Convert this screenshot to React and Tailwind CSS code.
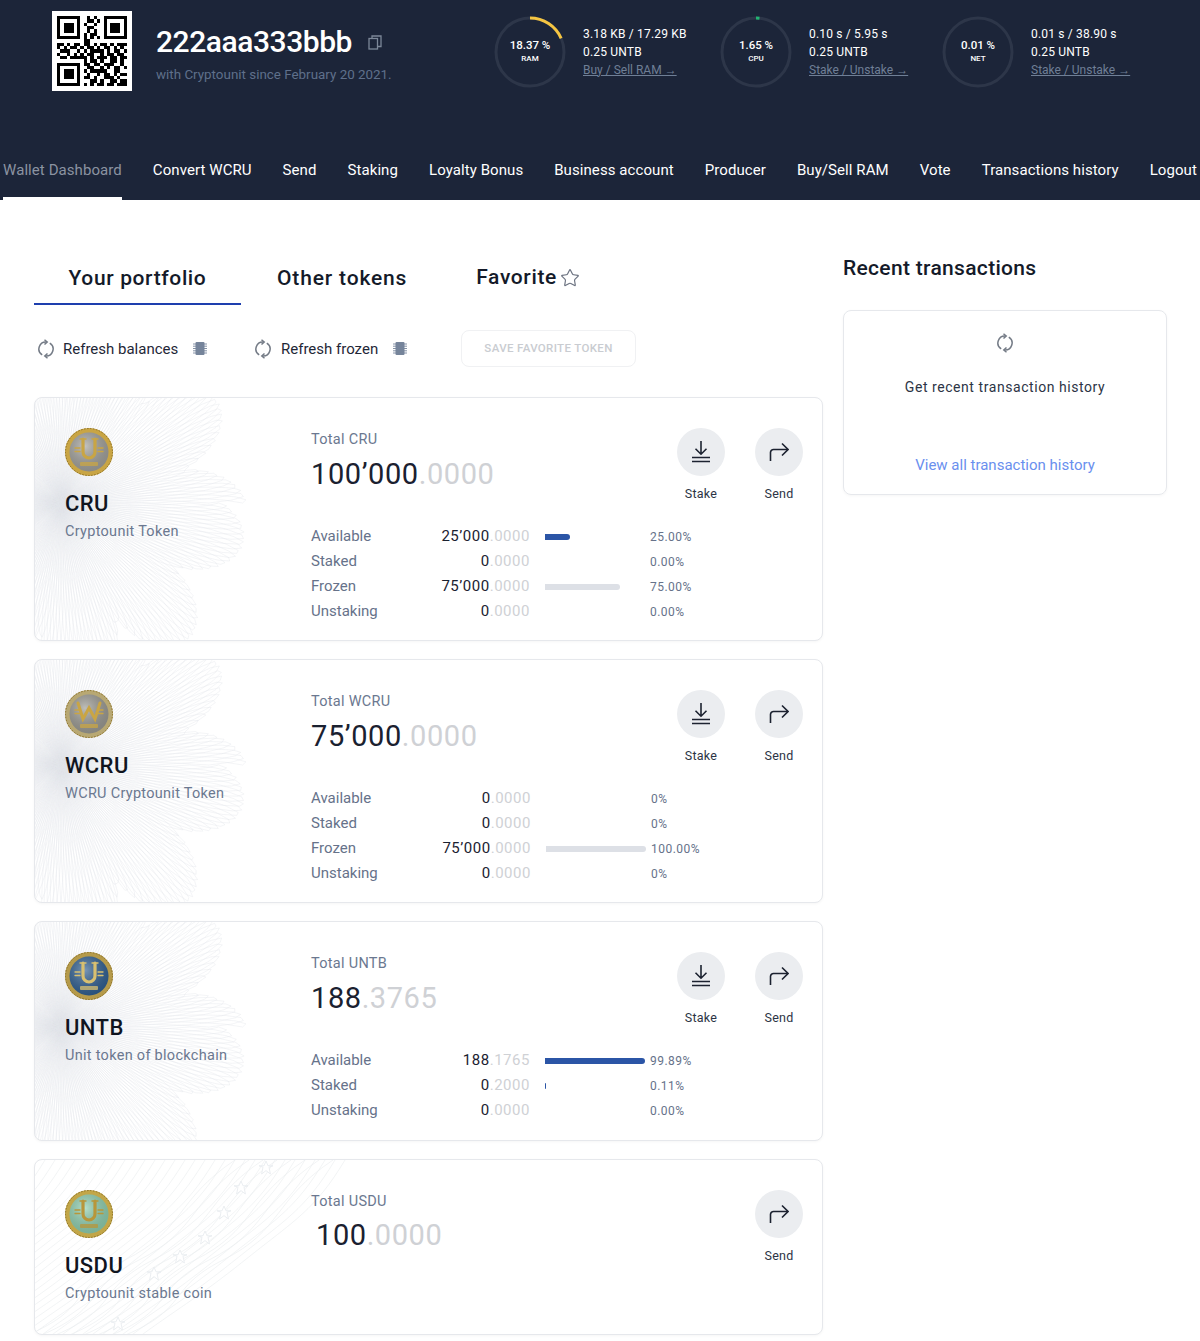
import React from "react";
import { Star } from "lucide-react";

const qrRows = [
  "111111100101001111111",
  "100000100110101000001",
  "101110101001001011101",
  "101110100110001011101",
  "101110100101001011101",
  "100000101011001000001",
  "111111101010101111111",
  "000000001100000000000",
  "110101101101011010111",
  "101011010110101101010",
  "011100101011110101101",
  "100101010110010110110",
  "011011111010111011011",
  "000000001011010011010",
  "111111101101101110010",
  "100000100110010101101",
  "101110101011111001100",
  "101110100100101101011",
  "101110101101001110100",
  "100000100011010011011",
  "111111101010110110111",
];

const navItems = [
  "Wallet Dashboard",
  "Convert WCRU",
  "Send",
  "Staking",
  "Loyalty Bonus",
  "Business account",
  "Producer",
  "Buy/Sell RAM",
  "Vote",
  "Transactions history",
  "Logout",
];

const tokens = [
  {
    name: "CRU",
    desc: "Cryptounit Token",
    coin: { ring: "#c9a544", inner: "#a3a29c", mark: "U", markColor: "#c9a544" },
    total: ["100’000", ".0000"],
    valueWidth: "w-[114px]",
    bottom: "pb-[16px]",
    rows: [
      ["Available", "25’000", ".0000", 25, "#2b55a6", "25.00%"],
      ["Staked", "0", ".0000", 0, "", "0.00%"],
      ["Frozen", "75’000", ".0000", 75, "#dde0e6", "75.00%"],
      ["Unstaking", "0", ".0000", 0, "", "0.00%"],
    ],
  },
  {
    name: "WCRU",
    desc: "WCRU Cryptounit Token",
    coin: { ring: "#b8a873", inner: "#9c9b94", mark: "W", markColor: "#c9a544" },
    total: ["75’000", ".0000"],
    valueWidth: "w-[115px]",
    bottom: "pb-[16px]",
    rows: [
      ["Available", "0", ".0000", 0, "", "0%"],
      ["Staked", "0", ".0000", 0, "", "0%"],
      ["Frozen", "75’000", ".0000", 100, "#dde0e6", "100.00%"],
      ["Unstaking", "0", ".0000", 0, "", "0%"],
    ],
  },
  {
    name: "UNTB",
    desc: "Unit token of blockchain",
    coin: { ring: "#b59a4a", inner: "#2f5f92", mark: "U", markColor: "#d8c070" },
    total: ["188", ".3765"],
    valueWidth: "w-[114px]",
    bottom: "pb-[17px]",
    rows: [
      ["Available", "188", ".1765", 99.89, "#2b55a6", "99.89%"],
      ["Staked", "0", ".2000", 1, "#2b55a6", "0.11%"],
      ["Unstaking", "0", ".0000", 0, "", "0.00%"],
    ],
  },
];

const QrCode = () => {
  let d = "";
  qrRows.forEach((row, y) => {
    row.split("").forEach((c, x) => {
      if (c === "1") d += `M${x} ${y}h1v1h-1z`;
    });
  });
  return (
    <svg viewBox="0 0 21 21" className="w-[70px] h-[70px]" shapeRendering="crispEdges">
      <path d={d} fill="#000" />
    </svg>
  );
};

const CopyIcon = () => (
  <svg width="14" height="15" viewBox="0 0 14 15" fill="none" stroke="#7c8798" strokeWidth="1.3">
    <rect x="1" y="3.5" width="8.5" height="10.5" />
    <path d="M4 3.5V1h9v10.5h-3.5" />
  </svg>
);

const RefreshIcon = ({ className }) => (
  <svg viewBox="0 0 18 20" fill="none" stroke="#747b86" strokeWidth="1.5" className={className}>
    <path d="M9.5 3A7 7 0 0 0 5.2 15.9" />
    <path d="M8.5 17A7 7 0 0 0 12.8 4.1" />
    <path d="M7.5.7 10.2 3 7.5 5.5" />
    <path d="M10.5 14.5 7.8 17l2.7 2.3" />
  </svg>
);

const ChipIcon = () => (
  <svg width="14" height="15" viewBox="0 0 14 15">
    <rect x="2.5" y="1" width="9" height="13" rx="1" fill="#76859b" />
    <path d="M0 3h14M0 5.2h14M0 7.5h14M0 9.8h14M0 12h14" stroke="#76859b" strokeWidth="0.9" />
  </svg>
);

const StakeIcon = () => (
  <svg width="20" height="24" viewBox="0 0 20 24" fill="none" stroke="#1c2230" strokeWidth="1.6">
    <path d="M10 1v13M4.5 8.8 10 14.2l5.5-5.4" />
    <path d="M1 17.5h18M1 21.5h18" />
  </svg>
);

const SendIcon = () => (
  <svg width="20" height="20" viewBox="0 0 20 20" fill="none" stroke="#1c2230" strokeWidth="1.6">
    <path d="M1.5 19v-8.5a3 3 0 0 1 3-3H19" />
    <path d="M13 1.5l6 6-6 6" />
  </svg>
);

const Gauge = ({ pct, label, color, value }) => {
  const r = 34;
  const c = 2 * Math.PI * r;
  return (
    <div className="relative w-[72px] h-[72px] shrink-0">
      <svg viewBox="0 0 72 72" className="w-full h-full -rotate-90">
        <circle cx="36" cy="36" r={r} fill="none" stroke="#2d3649" strokeWidth="3" />
        <circle
          cx="36"
          cy="36"
          r={r}
          fill="none"
          stroke={color}
          strokeWidth="3"
          strokeDasharray={`${(c * value) / 100} ${c}`}
        />
      </svg>
      <div className="absolute inset-0 flex flex-col items-center justify-center text-white">
        <div className="text-[11.5px] leading-[14px] font-medium">{pct}</div>
        <div className="text-[8px] leading-[13px] font-medium">{label}</div>
      </div>
    </div>
  );
};

const Resource = ({ pct, label, color, value, line1, link, width }) => (
  <div className={`flex items-center gap-[17px] ${width}`}>
    <Gauge pct={pct} label={label} color={color} value={value} />
    <div className="text-[12px] leading-[18px] text-white whitespace-nowrap tracking-[0.015em]">
      <div>{line1}</div>
      <div>0.25 UNTB</div>
      <div className="text-[#6f7f96] underline tracking-normal">{link}</div>
    </div>
  </div>
);

const Header = () => (
  <header className="bg-[#1c2539] h-[200px] flex flex-col justify-between">
    <div className="flex pl-[52px] pt-[11px]">
      <div className="w-[80px] h-[80px] bg-white flex items-center justify-center shrink-0">
        <QrCode />
      </div>
      <div className="ml-[24px] w-[338px] pt-[12px]">
        <div className="flex items-center gap-[16px]">
          <div className="text-[30px] leading-[38px] font-medium text-white tracking-[-0.015em]">222aaa333bbb</div>
          <CopyIcon />
        </div>
        <div className="text-[13.4px] leading-[20px] mt-[4px] text-[#5f708b]">with Cryptounit since February 20 2021.</div>
      </div>
      <div className="flex pt-[4px] -mt-[3px]">
        <Resource width="w-[226px]" pct="18.37 %" label="RAM" color="#f5c542" value={18.37} line1="3.18 KB / 17.29 KB" link="Buy / Sell RAM →" />
        <Resource width="w-[222px]" pct="1.65 %" label="CPU" color="#22b573" value={1.65} line1="0.10 s / 5.95 s" link="Stake / Unstake →" />
        <Resource width="w-[210px]" pct="0.01 %" label="NET" color="#22b573" value={0.01} line1="0.01 s / 38.90 s" link="Stake / Unstake →" />
      </div>
    </div>
    <nav className="flex justify-between pl-[3px] pr-[3px]">
      {navItems.map((item, i) => (
        <div
          key={item}
          className={
            i === 0
              ? "h-[41px] text-[15px] leading-[22px] tracking-[0.005em] whitespace-nowrap text-[#8b93a1] border-b-[3px] border-white"
              : "h-[41px] text-[15px] leading-[22px] tracking-[0.005em] whitespace-nowrap text-white"
          }
        >
          {item}
        </div>
      ))}
    </nav>
  </header>
);

// background line work of the token cards
const Rosette = () => {
  const cx = 26;
  const cy = 105;
  const curves = [];
  for (let j = 0; j < 10; j++) {
    let d = "";
    for (let a = 0; a <= 360; a += 1) {
      const t = (a * Math.PI) / 180;
      const lobe = Math.pow(Math.abs(Math.cos(((a + 23) * Math.PI * 5.14) / 180)), 0.7);
      const edge = 125 + 62 * lobe;
      const wave = 0.5 + 0.5 * Math.sin(t * 22 + (j * Math.PI * 2) / 10);
      const r = edge * wave;
      d += `${a === 0 ? "M" : "L"}${(cx + r * Math.cos(t)).toFixed(1)} ${(cy + r * Math.sin(t)).toFixed(1)}`;
    }
    curves.push(d);
  }
  return (
    <svg className="absolute left-0 top-0 w-[260px] h-full pointer-events-none" fill="none" stroke="#e3e7eb" strokeWidth="0.4">
      {curves.map((d, i) => (
        <path key={i} d={d} />
      ))}
    </svg>
  );
};

const Waves = () => {
  const lines = [];
  for (let i = 0; i < 34; i++) {
    const x = -60 + i * 10;
    lines.push(`M${x + 40} 0C${x + 10} 50 ${x - 10} 60 ${x - 60} 100S${x - 130} 150 ${x - 170} 180`);
  }
  for (let i = 0; i < 8; i++) {
    const x = 170 + i * 14;
    lines.push(`M${x + 30} 0C${x - 30} 40 ${x - 20} 70 ${x - 80} 100S${x - 110} 150 ${x - 190} 180`);
  }
  const stars = [[231, 8], [206, 28], [189, 53], [170, 78], [145, 97], [119, 114], [83, 164]];
  return (
    <svg className="absolute left-0 top-0 w-[340px] h-full pointer-events-none" fill="none" stroke="#e9ecef" strokeWidth="0.6">
      {lines.map((d, i) => (
        <path key={i} d={d} />
      ))}
      {stars.map(([x, y], i) => (
        <path
          key={i}
          d="M0-7 2-2.2 7-2.2 3-.8 4.4 6 0 2.6-4.4 6-3-.8-7-2.2-2-2.2z"
          transform={`translate(${x} ${y})`}
          fill="#fff"
          strokeWidth="0.9"
        />
      ))}
    </svg>
  );
};

const Coin = ({ id, ring, inner, mark, markColor }) => (
  <svg width="48" height="48" viewBox="0 0 48 48" className="block relative">
    <defs>
      <radialGradient id={id} cx="40%" cy="35%" r="70%">
        <stop offset="0%" stopColor="#fff" stopOpacity="0.35" />
        <stop offset="100%" stopColor="#000" stopOpacity="0.15" />
      </radialGradient>
    </defs>
    <circle cx="24" cy="24" r="24" fill={ring} />
    <circle cx="24" cy="24" r="23.5" fill="none" stroke="#8a6f25" strokeWidth="1" strokeDasharray="1.5 1.5" />
    <circle cx="24" cy="24" r="19.5" fill={inner} />
    <circle cx="24" cy="24" r="19.5" fill={`url(#${id})`} />
    <g fill="none" stroke={markColor} strokeLinecap="round">
      {mark === "U" ? (
        <>
          <path d="M18 11v13a6 6 0 0 0 12 0V11" strokeWidth="3.2" />
          <path d="M15 11h6M27 11h6" strokeWidth="1.4" />
        </>
      ) : (
        <path d="M13 13l5 16 6-11 6 11 5-16" strokeWidth="3" />
      )}
      <path d="M10 20h5M33 20h5M10 23.5h5M33 23.5h5" strokeWidth="1.3" />
    </g>
    <rect x="15" y="34" width="18" height="4" rx="1" fill={markColor} opacity="0.75" />
  </svg>
);

const Amount = ({ whole, frac }) => (
  <>
    <span className="text-[#1a2130]">{whole}</span>
    <span className="text-[#cfd1d5]">{frac}</span>
  </>
);

const RoundAction = ({ label, children }) => (
  <div className="w-[48px] flex flex-col items-center">
    <div className="w-[48px] h-[48px] rounded-full bg-[#ebedf0] flex items-center justify-center">{children}</div>
    <div className="mt-[9px] text-[12.5px] leading-[18px] text-[#2c3445] whitespace-nowrap tracking-[0.02em]">{label}</div>
  </div>
);

const BalanceRow = ({ label, whole, frac, pct, color, text, valueWidth }) => (
  <div className="flex items-center h-[25px]">
    <div className="w-[105px] text-[15px] text-[#66728a]">{label}</div>
    <div className={`${valueWidth} text-right text-[15px] tracking-[0.035em] whitespace-nowrap`}>
      <Amount whole={whole} frac={frac} />
    </div>
    <div className="w-[100px] ml-[15px] h-[6px]">
      {pct > 0 && <div className="h-full rounded-r-full" style={{ width: `${pct}%`, backgroundColor: color }} />}
    </div>
    <div className="ml-[5px] text-[12px] text-[#66728a] tracking-[0.04em]">{text}</div>
  </div>
);

const cardClass =
  "relative overflow-hidden bg-white rounded-lg border border-[#e6e8ec] shadow-[0_1px_3px_rgba(0,0,0,0.04)] flex";

const TokenCard = ({ token }) => (
  <div className={cardClass}>
    <Rosette />
    <div className="relative w-[276px] pl-[30px] pt-[30px] shrink-0">
      <Coin id={`coin-${token.name}`} {...token.coin} />
      <div className="mt-[14px] text-[22px] leading-[28px] font-medium text-[#10151f] tracking-[0.02em]">{token.name}</div>
      <div className="mt-[3px] text-[14.5px] leading-[22px] text-[#6b7890] tracking-[0.02em]">{token.desc}</div>
    </div>
    <div className={`relative flex-1 pt-[30px] ${token.bottom}`}>
      <div className="flex justify-between h-[96px] pr-[19px]">
        <div>
          <div className="mt-[1px] text-[14.5px] leading-[22px] text-[#6b7890] tracking-[0.02em]">Total {token.name}</div>
          <div className="mt-[5px] text-[29px] leading-[36px] tracking-[0.02em]">
            <Amount whole={token.total[0]} frac={token.total[1]} />
          </div>
        </div>
        <div className="flex gap-[30px]">
          <RoundAction label="Stake">
            <StakeIcon />
          </RoundAction>
          <RoundAction label="Send">
            <SendIcon />
          </RoundAction>
        </div>
      </div>
      {token.rows.map((r) => (
        <BalanceRow key={r[0]} label={r[0]} whole={r[1]} frac={r[2]} pct={r[3]} color={r[4]} text={r[5]} valueWidth={token.valueWidth} />
      ))}
    </div>
  </div>
);

const UsduCard = () => (
  <div className={cardClass}>
    <Waves />
    <div className="relative w-[276px] pl-[30px] pt-[30px] pb-[29px] shrink-0">
      <Coin id="coin-usdu" ring="#c2a648" inner="#8fd0b0" mark="U" markColor="#b8963a" />
      <div className="mt-[14px] text-[22px] leading-[28px] font-medium text-[#10151f] tracking-[0.02em]">USDU</div>
      <div className="mt-[3px] text-[14.5px] leading-[22px] text-[#6b7890] tracking-[0.02em]">Cryptounit stable coin</div>
    </div>
    <div className="relative flex-1 pt-[30px] pr-[19px] flex justify-between">
      <div>
        <div className="mt-[1px] text-[14.5px] leading-[22px] text-[#6b7890] tracking-[0.02em]">Total USDU</div>
        <div className="mt-[4px] pl-[5px] text-[29px] leading-[36px] tracking-[0.02em]">
          <Amount whole="100" frac=".0000" />
        </div>
      </div>
      <RoundAction label="Send">
        <SendIcon />
      </RoundAction>
    </div>
  </div>
);

const Tabs = () => (
  <div className="flex h-[50px]">
    <div className="w-[207px] text-center border-b-2 border-[#1e3fae] text-[21px] leading-[46px] font-medium text-[#141a29] tracking-[0.03em]">
      Your portfolio
    </div>
    <div className="ml-[36px] text-[21px] leading-[46px] font-medium text-[#141a29] tracking-[0.04em]">Other tokens</div>
    <div className="ml-[69px] flex items-center h-[46px] gap-[3px] text-[21px] font-medium text-[#141a29] tracking-[0.03em]">
      Favorite
      <Star size={20} color="#6b7280" strokeWidth={1.4} />
    </div>
  </div>
);

const RefreshRow = () => (
  <div className="flex items-center h-[37px] mt-[25px] mb-[30px] text-[15px] text-[#1f2737]">
    <div className="flex items-center w-[220px] pl-[3px]">
      <RefreshIcon className="w-[18px] h-[20px]" />
      <span className="ml-[8px] mt-[1px] w-[130px] whitespace-nowrap">Refresh balances</span>
      <ChipIcon />
    </div>
    <div className="flex items-center w-[207px]">
      <RefreshIcon className="w-[18px] h-[20px]" />
      <span className="ml-[9px] mt-[1px] w-[112px] whitespace-nowrap">Refresh frozen</span>
      <ChipIcon />
    </div>
    <div className="w-[175px] h-[37px] rounded-lg border border-[#f0f1f3] flex items-center justify-center text-[11.5px] font-medium text-[#c9ccd1] tracking-[0.03em]">
      SAVE FAVORITE TOKEN
    </div>
  </div>
);

const RecentPanel = () => (
  <aside className="w-[324px] shrink-0">
    <h2 className="text-[21px] leading-[28px] font-medium text-[#141a29] tracking-[0.015em]">Recent transactions</h2>
    <div className="mt-[28px] h-[185px] rounded-lg border border-[#e6e8ec] shadow-[0_1px_3px_rgba(0,0,0,0.04)] flex flex-col items-center pt-[22px]">
      <RefreshIcon className="w-[18px] h-[20px]" />
      <div className="mt-[24px] text-[14px] leading-[20px] text-[#2c3445] tracking-[0.04em]">Get recent transaction history</div>
      <div className="mt-[57px] text-[15px] leading-[22px] text-[#6a8fee]">View all transaction history</div>
    </div>
  </aside>
);

export default function App() {
  return (
    <div className="min-h-[1341px] bg-white font-['Roboto',sans-serif]">
      <Header />
      <main className="flex pl-[34px] pr-[33px] pt-[54px] gap-[20px]">
        <div className="w-[789px] shrink-0">
          <div className="pt-[1px]">
            <Tabs />
            <RefreshRow />
          </div>
          <div className="flex flex-col gap-[18px]">
            {tokens.map((t) => (
              <TokenCard key={t.name} token={t} />
            ))}
            <UsduCard />
          </div>
        </div>
        <RecentPanel />
      </main>
    </div>
  );
}
